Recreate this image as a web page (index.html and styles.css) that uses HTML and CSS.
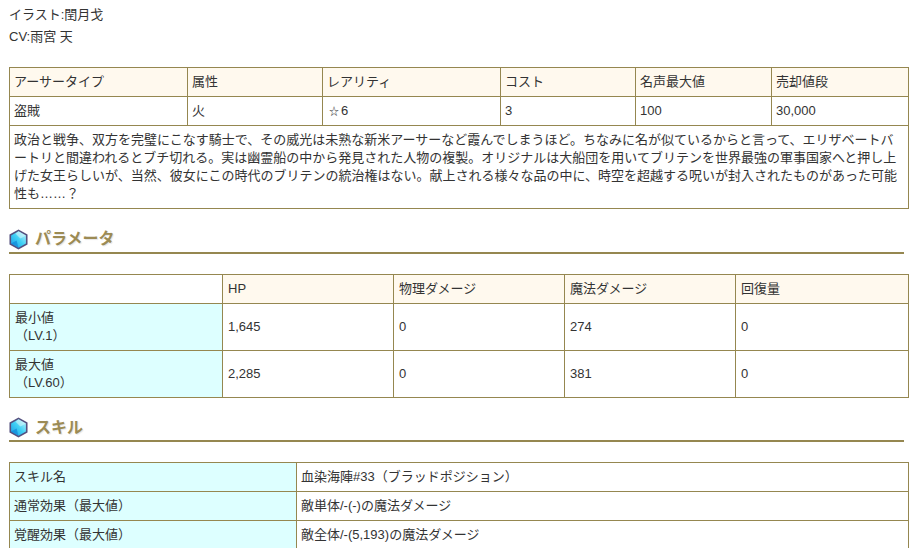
FILE: index.html
```html
<!DOCTYPE html>
<html lang="ja">
<head>
<meta charset="utf-8">
<title>キャラクター</title>
<link rel="stylesheet" href="styles.css">
</head>
<body>
<div class="credits">
  <p>イラスト:閏月戈</p>
  <p>CV:雨宮 天</p>
</div>
<table class="info">
  <colgroup><col class="i1"><col class="i2"><col class="i3"><col class="i4"><col class="i5"><col class="i6"></colgroup>
  <tr class="head"><td>アーサータイプ</td><td>属性</td><td>レアリティ</td><td>コスト</td><td>名声最大値</td><td>売却値段</td></tr>
  <tr><td>盗賊</td><td>火</td><td><span class="star">☆</span>6</td><td>3</td><td>100</td><td>30,000</td></tr>
  <tr><td colspan="6">政治と戦争、双方を完璧にこなす騎士で、その威光は未熟な新米アーサーなど霞んでしまうほど。ちなみに名が似ているからと言って、エリザベートバートリと間違われるとブチ切れる。実は幽霊船の中から発見された人物の複製。オリジナルは大船団を用いてブリテンを世界最強の軍事国家へと押し上げた女王らしいが、当然、彼女にこの時代のブリテンの統治権はない。献上される様々な品の中に、時空を超越する呪いが封入されたものがあった可能性も……？</td></tr>
</table>
<h2 class="section">
  <svg class="gem" viewBox="0 0 20 22" aria-hidden="true">
    <defs>
      <linearGradient id="gemfill" x1="0" y1="1" x2="1" y2="0">
        <stop offset="0" stop-color="#1a9be6"/>
        <stop offset="0.5" stop-color="#3fd0f5"/>
        <stop offset="1" stop-color="#c4f5fb"/>
      </linearGradient>
    </defs>
    <polygon points="10,0.5 19.5,5.8 19.5,16.2 10,21.5 0.5,16.2 0.5,5.8" fill="#54507f"/>
    <polygon points="10,2.4 17.8,6.8 17.8,15.2 10,19.6 2.2,15.2 2.2,6.8" fill="url(#gemfill)"/>
    <polygon points="10,2.4 17.8,6.8 12,10 7,5" fill="#d8f8fc" opacity="0.55"/>
    <polygon points="2.2,15.2 8,12 10,19.6" fill="#0b7fd4" opacity="0.6"/>
  </svg>
  <span>パラメータ</span>
</h2>
<table class="params">
  <colgroup><col class="p1"><col class="p2"><col class="p3"><col class="p4"><col class="p5"></colgroup>
  <tr><td></td><td class="cream">HP</td><td class="cream">物理ダメージ</td><td class="cream">魔法ダメージ</td><td class="cream">回復量</td></tr>
  <tr><td class="cyan">最小値<br>（LV.1）</td><td>1,645</td><td>0</td><td>274</td><td>0</td></tr>
  <tr><td class="cyan">最大値<br>（LV.60）</td><td>2,285</td><td>0</td><td>381</td><td>0</td></tr>
</table>
<h2 class="section">
  <svg class="gem" viewBox="0 0 20 22" aria-hidden="true">
    <polygon points="10,0.5 19.5,5.8 19.5,16.2 10,21.5 0.5,16.2 0.5,5.8" fill="#54507f"/>
    <polygon points="10,2.4 17.8,6.8 17.8,15.2 10,19.6 2.2,15.2 2.2,6.8" fill="url(#gemfill)"/>
    <polygon points="10,2.4 17.8,6.8 12,10 7,5" fill="#d8f8fc" opacity="0.55"/>
    <polygon points="2.2,15.2 8,12 10,19.6" fill="#0b7fd4" opacity="0.6"/>
  </svg>
  <span>スキル</span>
</h2>
<table class="skill">
  <colgroup><col class="s1"><col class="s2"></colgroup>
  <tr><td class="cyan">スキル名</td><td>血染海陣#33（ブラッドポジション）</td></tr>
  <tr><td class="cyan">通常効果（最大値）</td><td>敵単体/-(-)の魔法ダメージ</td></tr>
  <tr><td class="cyan">覚醒効果（最大値）</td><td>敵全体/-(5,193)の魔法ダメージ</td></tr>
</table>
</body>
</html>
```
FILE: styles.css
```css
html, body { background: #fff; }
body {
  margin: 0;
  padding: 0 0 0 9px;
  width: 909px;
  overflow: hidden;
  height: 548px;
  box-sizing: border-box;
  font-family: "Liberation Sans", Arial, "Noto Sans CJK JP", sans-serif;
  font-size: 13px;
  line-height: 18px;
  color: #333;
}
.credits { height: 67px; padding-top: 6px; box-sizing: border-box; }
.credits p { margin: 0 0 4px; }
table {
  border-collapse: collapse;
  table-layout: fixed;
  width: 899px;
}
td {
  border: 1px solid #958750;
  padding: 5px 4px;
  vertical-align: middle;
}
.params td { padding-left: 5px; }
.head td, .cream { background: #fff9ee; }
.cyan { background: #ddffff; }
.star { display: inline-block; width: 14px; text-align: center; font-size: 10px; line-height: 1; }
.i1 { width: 178px; } .i2 { width: 135px; } .i3 { width: 178px; }
.i4 { width: 135px; } .i5 { width: 136px; } .i6 { width: 137px; }
.p1 { width: 213px; } .p2 { width: 171px; } .p3 { width: 171px; } .p4 { width: 171px; } .p5 { width: 173px; }
.s1 { width: 287px; } .s2 { width: 612px; }
.section {
  display: flex;
  align-items: center;
  gap: 7px;
  width: 895px;
  margin: 17.5px 0 20.1px;
  height: 27px;
  box-sizing: border-box;
  border-bottom: 2px solid #958750;
  font-size: 16px;
  line-height: 20px;
  font-weight: bold;
  color: #9c8b54;
  text-shadow: 1px 1px 1px rgba(0, 0, 0, 0.1);
}
.gem { width: 19px; height: 21px; flex: none; }
```
